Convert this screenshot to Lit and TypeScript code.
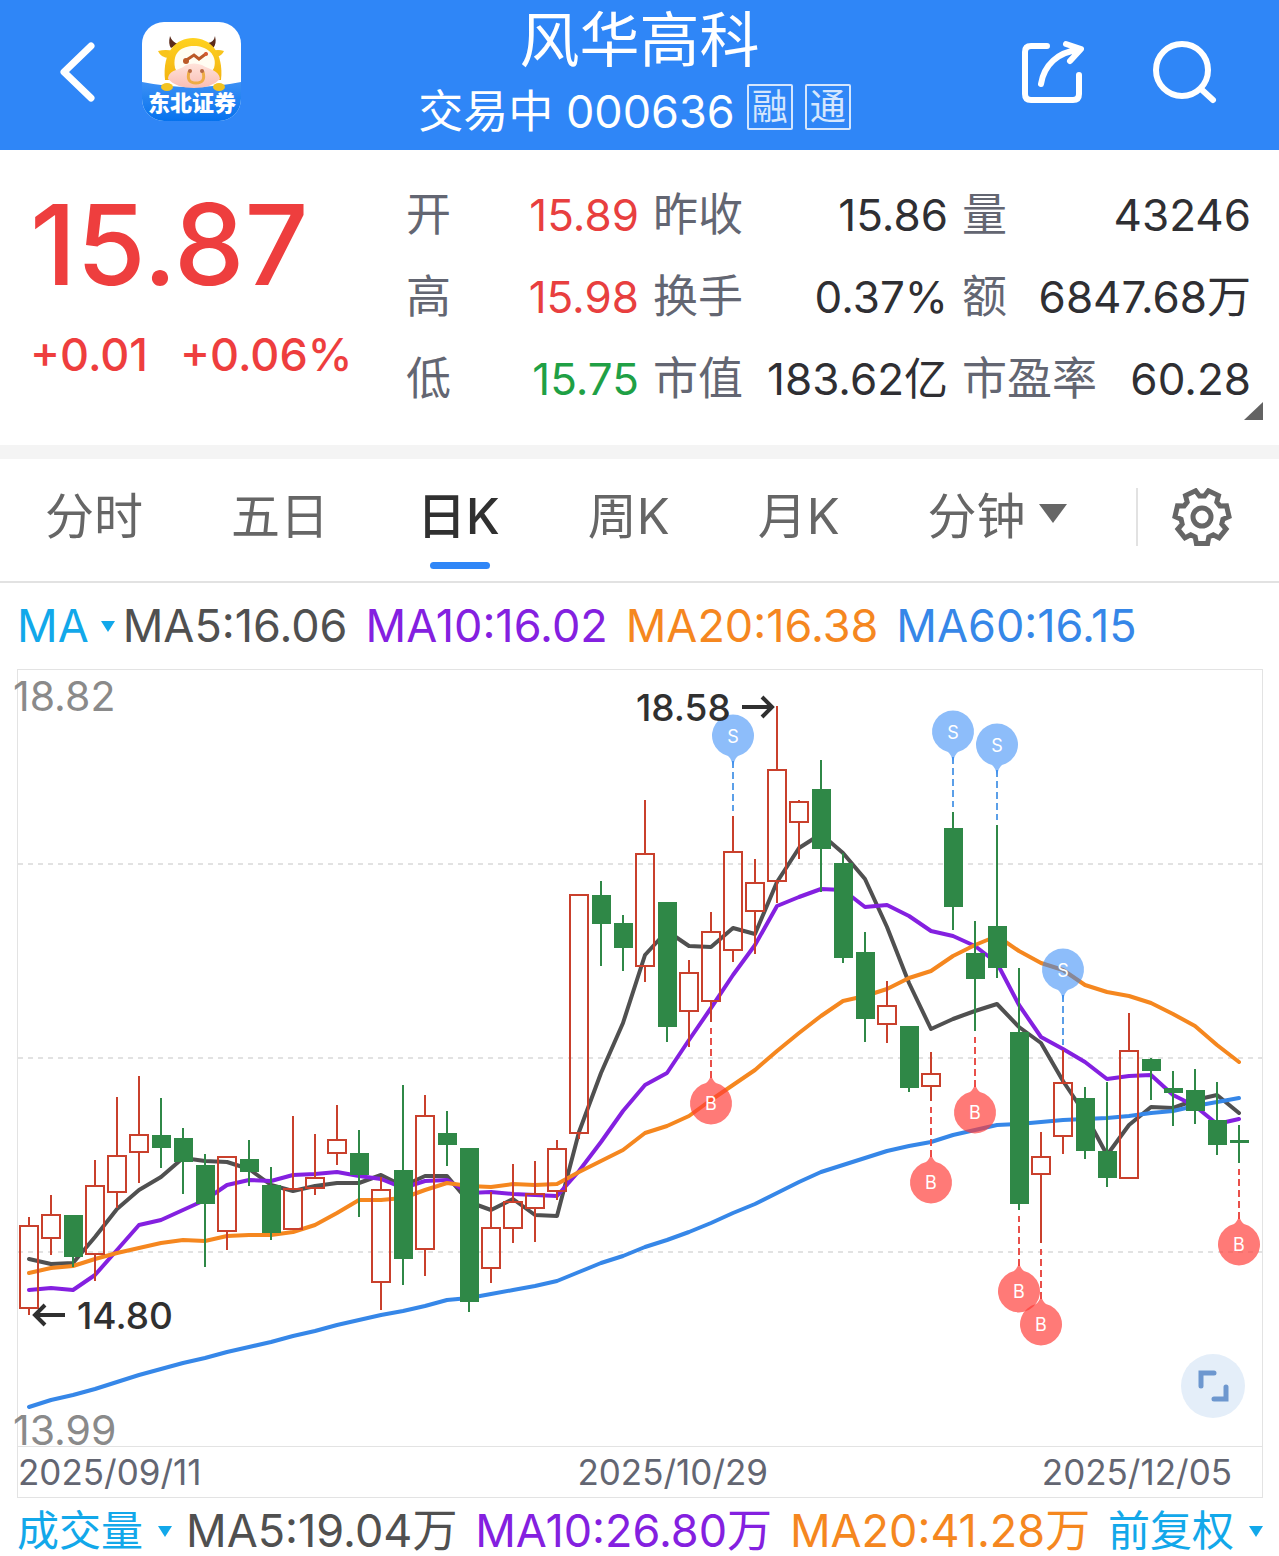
import { LitElement, html, svg, css } from "lit";
import { customElement, state } from "lit/decorators.js";
import { classMap } from "lit/directives/class-map.js";

// [rising, high, body top, body bottom, low] in plot units
type Candle = [number, number, number, number, number];

const CANDLES: Candle[] = [
  [1, 1217, 1226, 1308, 1315], [1, 1195, 1215, 1238, 1255], [0, 1215, 1215, 1257, 1267], [1, 1160, 1186, 1254, 1281],
  [1, 1097, 1156, 1192, 1208], [1, 1076, 1135, 1152, 1183], [0, 1098, 1135, 1148, 1168], [0, 1128, 1138, 1162, 1194],
  [0, 1154, 1165, 1204, 1267], [1, 1157, 1157, 1231, 1250], [0, 1140, 1159, 1172, 1186], [0, 1167, 1185, 1233, 1240],
  [1, 1116, 1189, 1229, 1229], [1, 1134, 1178, 1188, 1195], [1, 1105, 1140, 1153, 1165], [0, 1130, 1153, 1175, 1217],
  [1, 1177, 1190, 1282, 1310], [0, 1085, 1170, 1259, 1285], [1, 1095, 1116, 1249, 1276], [0, 1111, 1133, 1145, 1166],
  [0, 1148, 1148, 1302, 1312], [1, 1192, 1228, 1268, 1283], [1, 1164, 1202, 1228, 1243], [1, 1161, 1194, 1208, 1242],
  [1, 1140, 1149, 1191, 1200], [1, 895, 895, 1133, 1139], [0, 881, 895, 924, 966], [0, 915, 923, 948, 971],
  [1, 800, 854, 966, 982], [0, 902, 902, 1027, 1042], [1, 960, 973, 1011, 1047], [1, 912, 932, 1001, 1022],
  [1, 816, 852, 950, 962], [1, 859, 883, 911, 954], [1, 706, 770, 881, 903], [1, 800, 802, 822, 859],
  [0, 760, 789, 849, 892], [0, 853, 863, 958, 963], [0, 932, 952, 1019, 1042], [1, 981, 1006, 1024, 1043],
  [0, 1026, 1026, 1088, 1092], [1, 1052, 1074, 1086, 1101], [0, 812, 828, 907, 930], [0, 921, 953, 979, 1031],
  [0, 825, 926, 968, 978], [0, 968, 1032, 1204, 1210], [1, 1132, 1157, 1174, 1243], [1, 1050, 1083, 1136, 1154],
  [0, 1087, 1098, 1151, 1159], [0, 1082, 1151, 1178, 1187], [1, 1013, 1051, 1178, 1178], [0, 1058, 1059, 1071, 1100],
  [0, 1071, 1088, 1093, 1126], [0, 1069, 1090, 1111, 1124], [0, 1082, 1120, 1145, 1155], [0, 1125, 1140, 1143, 1163],
];

const LINES = [
  {
    tone: "ma5",
    ys: [1259, 1264, 1263, 1237, 1209, 1190, 1177, 1158, 1161, 1162, 1169, 1185, 1191, 1186, 1183, 1183, 1175, 1186, 1176,
      1176, 1202, 1210, 1199, 1215, 1216, 1132, 1073, 1023, 955, 931, 946, 947, 928, 934, 882, 848, 834, 853, 879, 927, 983,
      1029, 1019, 1011, 1004, 1027, 1043, 1081, 1114, 1155, 1125, 1107, 1108, 1100, 1095, 1113],
  },
  {
    tone: "ma10",
    ys: [1290, 1288, 1290, 1275, 1250, 1225, 1220, 1210, 1200, 1185, 1180, 1181, 1175, 1174, 1172, 1176, 1179, 1188, 1181,
      1180, 1193, 1192, 1194, 1195, 1196, 1171, 1142, 1111, 1085, 1073, 1040, 1008, 975, 945, 906, 897, 889, 890, 907, 905,
      916, 931, 936, 946, 963, 1005, 1037, 1049, 1062, 1079, 1076, 1075, 1095, 1106, 1124, 1119],
  },
  {
    tone: "ma20",
    ys: [1273, 1268, 1266, 1259, 1253, 1248, 1243, 1240, 1241, 1236, 1235, 1235, 1232, 1225, 1213, 1200, 1200, 1198, 1190,
      1183, 1186, 1187, 1184, 1185, 1184, 1172, 1161, 1150, 1133, 1126, 1116, 1100, 1085, 1070, 1051, 1033, 1016, 1001, 996,
      989, 978, 971, 956, 945, 936, 951, 963, 970, 985, 992, 996, 1003, 1014, 1026, 1045, 1062],
  },
  {
    tone: "ma60",
    ys: [1407, 1400, 1395, 1389, 1382, 1375, 1369, 1363, 1358, 1352, 1347, 1342, 1336, 1331, 1325, 1320, 1315, 1311, 1306,
      1300, 1298, 1294, 1290, 1286, 1281, 1272, 1263, 1256, 1247, 1240, 1232, 1223, 1213, 1204, 1193, 1182, 1172, 1165, 1158,
      1151, 1146, 1142, 1135, 1130, 1125, 1124, 1122, 1120, 1119, 1118, 1116, 1113, 1111, 1106, 1102, 1098],
  },
];

const SELLS = [32, 42, 44, 47];
const BUYS = [31, 41, 43, 45, 46, 55];

const QUOTES = [
  ["开", "15.89", "up"], ["昨收", "15.86", ""], ["量", "43246", ""],
  ["高", "15.98", "up"], ["换手", "0.37%", ""], ["额", "6847.68万", ""],
  ["低", "15.75", "down"], ["市值", "183.62亿", ""], ["市盈率", "60.28", ""],
];

const TABS = ["分时", "五日", "日K", "周K", "月K"];

const xOf = (i: number) => 29 + 22 * i;

const gearPath = () => {
  const points: string[] = [];
  const at = (r: number, deg: number) => {
    const a = (deg * Math.PI) / 180;
    points.push(`${(30 + r * Math.cos(a)).toFixed(1)} ${(29 + r * Math.sin(a)).toFixed(1)}`);
  };
  for (let i = 0; i < 7; i++) {
    const c = 90 + (i * 360) / 7;
    at(21, c - 19);
    at(27, c - 12);
    at(27, c + 12);
    at(21, c + 19);
  }
  return `M${points.join("L")}Z`;
};

@customElement("kline-chart")
class KlineChart extends LitElement {
  static styles = css`
    :host { display: block; }
    .plot { display: block; width: 100%; height: auto; overflow: visible; }
    .frame { fill: none; stroke: #e3e3e3; stroke-width: 1; }
    .grid { stroke: #e2e2e2; stroke-width: 2; stroke-dasharray: 5 5; }
    .line { fill: none; stroke-width: 4; stroke-linejoin: round; stroke-linecap: round; }
    .ma5 { stroke: #505050; }
    .ma10 { stroke: #8420e0; }
    .ma20 { stroke: #f5871f; }
    .ma60 { stroke: #3687e8; }
    .up { stroke: #c9402c; fill: none; stroke-width: 2; }
    .down { stroke: #2f8847; fill: none; stroke-width: 2; }
    .solid { fill: #2f8847; }
    .axis { font: 41px Inter, "Liberation Sans", sans-serif; fill: #8a8a8a; }
    .peak { font: 500 37px Inter, "Liberation Sans", sans-serif; fill: #303030; }
    .arrow { fill: none; stroke: #303030; stroke-width: 4; }
    .sell { fill: #2f86f5; fill-opacity: 0.55; }
    .buy { fill: #ff3b36; fill-opacity: 0.68; }
    .sell-dash { stroke: #5b9fe8; stroke-width: 2; stroke-dasharray: 7 4; }
    .buy-dash { stroke: #e8504a; stroke-width: 2; stroke-dasharray: 7 4; }
    .mark { font: 18px Inter, "Liberation Sans", sans-serif; fill: #fff; text-anchor: middle; }
  `;

  private candle([rising, high, top, bottom, low]: Candle, i: number) {
    const x = xOf(i);
    return rising
      ? svg`<path class="up" d="M${x} ${high}V${top}M${x} ${bottom}V${low}M${x - 9} ${top}H${x + 9}V${bottom}H${x - 9}Z"/>`
      : svg`<path class="down" d="M${x} ${high}V${low}"/>
            <rect class="solid" x=${x - 9} y=${top} width="19" height=${bottom - top}/>`;
  }

  private sell(i: number) {
    const x = xOf(i);
    const y = CANDLES[i][1] - 80;
    return svg`<path class="sell-dash" d="M${x} ${y + 25}V${y + 75}"/>
      <path class="sell" d="M${x - 5} ${y + 20}A21 21 0 1 1 ${x + 5} ${y + 20}Q${x + 2} ${y + 22} ${x} ${y + 30}Q${x - 2} ${y + 22} ${x - 5} ${y + 20}Z"/>
      <text class="mark" x=${x} y=${y + 7}>S</text>`;
  }

  private buy(i: number) {
    const x = xOf(i);
    const y = CANDLES[i][4] + 81;
    return svg`<path class="buy-dash" d="M${x} ${y - 25}V${y - 75}"/>
      <path class="buy" d="M${x - 5} ${y - 20}A21 21 0 1 0 ${x + 5} ${y - 20}Q${x + 2} ${y - 22} ${x} ${y - 28}Q${x - 2} ${y - 22} ${x - 5} ${y - 20}Z"/>
      <text class="mark" x=${x} y=${y + 7}>B</text>`;
  }

  render() {
    return html`
      <svg class="plot" viewBox="17 669 1246 778" role="img" aria-label="日K">
        <rect class="frame" x="17.5" y="669.5" width="1245" height="777"/>
        ${[864, 1058, 1252].map((y) => svg`<path class="grid" d="M18 ${y}H1262"/>`)}
        ${LINES.map((l) => svg`<polyline class="line ${l.tone}" points=${l.ys.map((y, i) => `${xOf(i)},${y}`).join(" ")}/>`)}
        ${CANDLES.map((c, i) => this.candle(c, i))}
        ${SELLS.map((i) => this.sell(i))}
        ${BUYS.map((i) => this.buy(i))}
        <text class="axis" x="13" y="711">18.82</text>
        <text class="axis" x="13" y="1445">13.99</text>
        <text class="peak" x="636" y="721">18.58</text>
        <path class="arrow" d="M742 707H772M762 697L772 707L762 717"/>
        <text class="peak" x="77" y="1329">14.80</text>
        <path class="arrow" d="M65 1315H36M45 1305L35 1315L45 1325"/>
      </svg>
    `;
  }
}

@customElement("app-root")
class AppRoot extends LitElement {
  @state() private tab = "日K";

  static styles = css`
    :host {
      display: block;
      background: #fff;
      color: #2f2f33;
      font-family: Inter, "Noto Sans CJK SC", sans-serif;
    }
    * { box-sizing: border-box; }
    button { border: 0; padding: 0; margin: 0; background: none; font: inherit; color: inherit; cursor: pointer; }
    svg { display: block; }

    .header {
      display: grid;
      grid-template-columns: 1fr auto 1fr;
      align-items: center;
      height: 150px;
      padding: 0 60px 7px;
      background: #2f86f7;
      color: #fff;
    }
    .side { display: flex; align-items: center; gap: 46px; }
    .side.end { justify-content: flex-end; gap: 68px; }
    .stroke { fill: none; stroke: #fff; stroke-linecap: round; stroke-linejoin: round; }
    .brand { font: 900 22px "Noto Sans CJK SC", sans-serif; fill: #fff; text-anchor: middle; }
    .heading { display: flex; flex-direction: column; align-items: center; gap: 8px; }
    .name { margin: 0; font-size: 60px; line-height: 72px; font-weight: 400; }
    .sub { display: flex; align-items: center; gap: 12px; padding-right: 10px; font-size: 45px; line-height: 56px; }
    .badge {
      width: 46px; height: 46px; border: 2px solid #d5e6fd; border-radius: 2px;
      font-size: 36px; line-height: 42px; text-align: center; color: #d5e6fd; margin-bottom: 10px;
    }

    .quote {
      position: relative;
      display: grid;
      grid-template-columns: 376fr 845fr;
      padding: 24px 28px 25px 30px;
      border-bottom: 14px solid #f4f4f4;
    }
    .price { color: #ee3e3e; font-weight: 500; }
    .last { font-size: 112px; line-height: 140px; }
    .change { display: flex; gap: 32px; font-size: 45px; line-height: 82px; }
    .stats {
      display: grid;
      grid-template-columns: 233fr 295fr 289fr;
      column-gap: 14px;
      margin: 0;
      font-size: 44px;
      line-height: 82px;
      white-space: nowrap;
    }
    .stat { display: flex; justify-content: space-between; min-width: 0; }
    .stat dt { font-size: 45px; color: #636672; }
    .stat dd { margin: 0; }
    .up { color: #e83f3f; }
    .down { color: #1fa045; }
    .corner { position: absolute; right: 16px; bottom: 25px; fill: #636363; }

    .tabs { display: flex; align-items: center; height: 124px; padding: 0 47px 7px 45px; border-bottom: 2px solid #e2e2e2; color: #666; }
    .tablist { display: flex; gap: 88px; font-size: 49px; line-height: 72px; white-space: nowrap; }
    .tab { position: relative; }
    .tab.active { color: #303030; font-weight: 500; }
    .tab.active::after {
      content: ""; position: absolute; left: 13px; bottom: -16px; width: 60px; height: 7px; border-radius: 4px; background: #2f86f7;
    }
    .more { display: flex; align-items: center; gap: 13px; }
    .more svg { margin-bottom: 6px; }
    .settings { margin-left: auto; padding-left: 34px; border-left: 2px solid #e2e2e2; }

    .legend { display: flex; align-items: center; gap: 18px; height: 86px; padding: 0 16px 0 17px; font-size: 45px; line-height: 48px; white-space: nowrap; }
    .legend.volume { justify-content: space-between; gap: 12px; height: 58px; padding-top: 8px; }
    .pick { display: flex; align-items: center; gap: 12px; color: #12a8ea; }
    .volume .pick { gap: 15px; font-size: 42px; }
    .group { display: flex; gap: 8px; align-items: center; }
    .volume .group { gap: 14px; }
    .pick svg { fill: #12a8ea; }
    .ma5 { color: #505050; }
    .ma10 { color: #8420e0; }
    .ma20 { color: #f5871f; }
    .ma60 { color: #3687e8; }

    .chart { position: relative; margin: 0 16px 0 17px; }
    .expand {
      position: absolute; right: 18px; bottom: 29px; width: 64px; height: 64px; border-radius: 50%; background: #e4eef9;
    }
    .dates {
      display: grid; grid-template-columns: 559fr 464fr 220fr; margin: 0 16px 0 17px;
      border: 1px solid #e3e3e3; border-top: 0; font-size: 35px; line-height: 50px; color: #636672;
    }
  `;

  private caret() {
    return html`<svg width="14" height="11" viewBox="0 0 14 11" aria-hidden="true"><path d="M0 0H14L7 11Z"/></svg>`;
  }

  private logo() {
    return html`
      <svg width="99" height="99" viewBox="0 0 99 99" role="img" aria-label="东北证券">
        <defs>
          <linearGradient id="sea" x1="0" y1="0" x2="0" y2="1"><stop offset="0" stop-color="#3c90f5"/><stop offset="1" stop-color="#0572ee"/></linearGradient>
          <linearGradient id="hide" x1="0" y1="0" x2="0" y2="1"><stop offset="0" stop-color="#ffd21f"/><stop offset="1" stop-color="#f3b410"/></linearGradient>
          <linearGradient id="snout" x1="0" y1="0" x2="0" y2="1"><stop offset="0" stop-color="#ffe3da"/><stop offset="1" stop-color="#f9bdb4"/></linearGradient>
          <clipPath id="round"><rect width="99" height="99" rx="22"/></clipPath>
        </defs>
        <g clip-path="url(#round)">
          <rect width="99" height="99" fill="#fff"/>
          <path d="M0 60Q50 70 99 60V99H0Z" fill="url(#sea)"/>
          <path d="M28 14Q26 22 29 26L36 22Q30 20 28 14ZM73 14Q75 22 71 26L66 21Q72 20 73 14Z" fill="#5b2b1b"/>
          <path d="M16 29Q24 27 31 29L27 36Q19 36 16 29ZM82 29Q76 27 70 29L74 35Q80 34 82 29Z" fill="#f8c41c"/>
          <path d="M23 58C20 30 34 16 51 16S82 30 79 58Z" fill="url(#hide)"/>
          <path d="M33 46C30 30 40 24 52 24S76 32 72 46L66 56H38Z" fill="#fffdf2"/>
          <path d="M26 57C27 47 37 49 44 43Q52 40 60 43C68 48 77 48 78 57Q70 66 52 66T26 57Z" fill="url(#snout)"/>
          <path d="M43 39L52 33L57 37L65 31" fill="none" stroke="#bb5a28" stroke-width="3"/>
          <circle cx="44" cy="39" r="3" fill="#bb5a28"/><circle cx="64" cy="32" r="2" fill="#d65b32"/>
          <path d="M47 50Q44 61 54 61T61 50" fill="none" stroke="#efac45" stroke-width="3" stroke-linecap="round"/>
          <circle cx="48" cy="49" r="2" fill="#b86a45"/><circle cx="60" cy="49" r="2" fill="#b86a45"/>
          <ellipse cx="25" cy="65" rx="6" ry="4" fill="#f3c321"/><ellipse cx="77" cy="65" rx="6" ry="4" fill="#f3c321"/>
          <text class="brand" x="50" y="89">东北证券</text>
        </g>
      </svg>`;
  }

  render() {
    return html`
      <header class="header">
        <div class="side">
          <button aria-label="返回">
            <svg width="36" height="60" viewBox="0 0 36 60"><path class="stroke" stroke-width="7" d="M31 4L4 30L31 56"/></svg>
          </button>
          ${this.logo()}
        </div>
        <div class="heading">
          <h1 class="name">风华高科</h1>
          <div class="sub"><span>交易中 000636</span><span class="badge">融</span><span class="badge">通</span></div>
        </div>
        <div class="side end">
          <button aria-label="分享">
            <svg width="64" height="64" viewBox="0 0 64 64"><path class="stroke" stroke-width="6" d="M26 6H10Q4 6 4 12V54Q4 60 10 60H52Q58 60 58 54V35M20 44C23 25 37 12 57 10M45 4L60 9L49 21"/></svg>
          </button>
          <button aria-label="搜索">
            <svg width="66" height="64" viewBox="0 0 66 64"><circle class="stroke" stroke-width="6" cx="29" cy="30" r="26"/><path class="stroke" stroke-width="6" d="M48 49L60 60"/></svg>
          </button>
        </div>
      </header>

      <section class="quote">
        <div class="price">
          <div class="last">15.87</div>
          <div class="change"><span>+0.01</span><span>+0.06%</span></div>
        </div>
        <dl class="stats">
          ${QUOTES.map(([k, v, tone]) => html`<div class="stat"><dt>${k}</dt><dd class=${tone}>${v}</dd></div>`)}
        </dl>
        <svg class="corner" width="19" height="18" viewBox="0 0 19 18" aria-hidden="true"><path d="M19 0V18H0Z"/></svg>
      </section>

      <nav class="tabs">
        <div class="tablist">
          ${TABS.map(
            (t) => html`<button class=${classMap({ tab: true, active: t === this.tab })} @click=${() => (this.tab = t)}>${t}</button>`,
          )}
          <button class="more">分钟<svg width="28" height="19" viewBox="0 0 28 19" fill="#666"><path d="M0 0H28L14 19Z"/></svg></button>
        </div>
        <button class="settings" aria-label="设置">
          <svg width="60" height="58" viewBox="0 0 60 58" fill="none" stroke="#666" stroke-width="5">
            <path d=${gearPath()}/><circle cx="30" cy="29" r="9"/>
          </svg>
        </button>
      </nav>

      <div class="legend">
        <div class="group">
          <button class="pick">MA${this.caret()}</button>
          <span class="ma5">MA5:16.06</span>
        </div>
        <span class="ma10">MA10:16.02</span>
        <span class="ma20">MA20:16.38</span>
        <span class="ma60">MA60:16.15</span>
      </div>

      <div class="chart">
        <kline-chart></kline-chart>
        <button class="expand" aria-label="全屏">
          <svg width="64" height="64" viewBox="0 0 64 64" fill="none" stroke="#6d97cf" stroke-width="5" stroke-linecap="round"><path d="M33 19H20V32M45 33V45H33"/></svg>
        </button>
      </div>
      <div class="dates"><span>2025/09/11</span><span>2025/10/29</span><span>2025/12/05</span></div>

      <div class="legend volume">
        <div class="group">
          <button class="pick">成交量${this.caret()}</button>
          <span class="ma5">MA5:19.04万</span>
        </div>
        <span class="ma10">MA10:26.80万</span>
        <span class="ma20">MA20:41.28万</span>
        <button class="pick">前复权${this.caret()}</button>
      </div>
    `;
  }
}
